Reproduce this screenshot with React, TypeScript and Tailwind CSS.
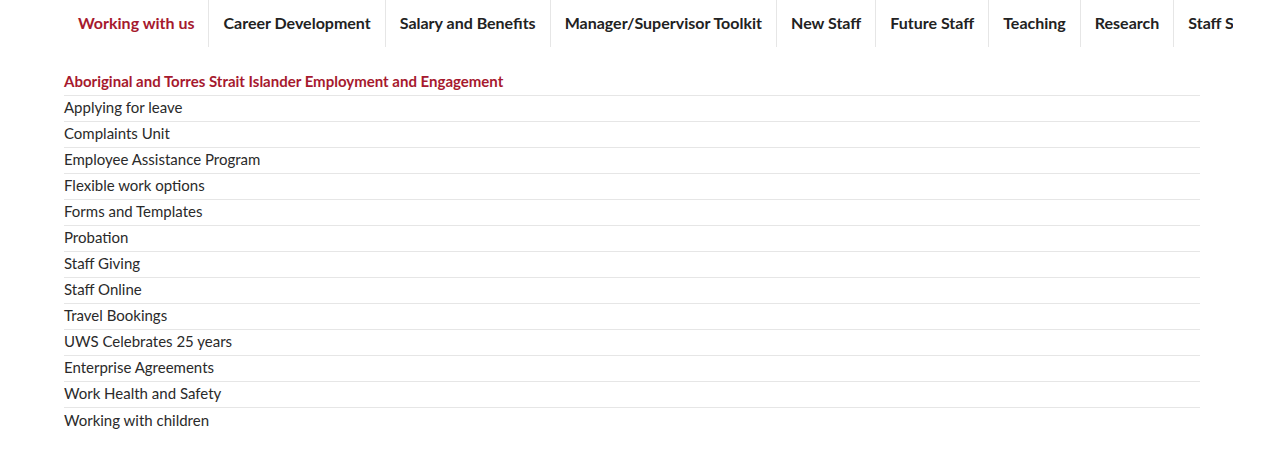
import React from "react"

const navItems = [
  "Working with us",
  "Career Development",
  "Salary and Benefits",
  "Manager/Supervisor Toolkit",
  "New Staff",
  "Future Staff",
  "Teaching",
  "Research",
  "Staff Services",
]

const links = [
  "Aboriginal and Torres Strait Islander Employment and Engagement",
  "Applying for leave",
  "Complaints Unit",
  "Employee Assistance Program",
  "Flexible work options",
  "Forms and Templates",
  "Probation",
  "Staff Giving",
  "Staff Online",
  "Travel Bookings",
  "UWS Celebrates 25 years",
  "Enterprise Agreements",
  "Work Health and Safety",
  "Working with children",
]

export default function App() {
  return (
    <div className="w-[1264px] h-[465px] bg-white font-['Lato',sans-serif] overflow-hidden">
      {/* Top menu */}
      <nav className="ml-16 w-[1169px] overflow-hidden">
        <ul className="flex h-[47px] whitespace-nowrap">
          {navItems.map((item, i) => (
            <li
              key={item}
              className={
                "flex items-center pb-[2px] px-[14px] text-[16px] font-bold " +
                (i === 0 ? "text-[#a6192e]" : "text-[#222] border-l border-[#e6e6e6]")
              }
            >
              {item}
            </li>
          ))}
        </ul>
      </nav>

      {/* Links list */}
      <ul className="mx-16 mt-[23px] w-[1136px]">
        {links.map((link, i) => (
          <li
            key={link}
            className={
              "h-[26px] flex items-center pb-[2px] text-[15px] " +
              (i < links.length - 1 ? "border-b border-[#e6e6e6] " : "") +
              (i === 0 ? "font-bold text-[#a6192e]" : "text-[#2a2a2a]")
            }
          >
            {link}
          </li>
        ))}
      </ul>
    </div>
  )
}
